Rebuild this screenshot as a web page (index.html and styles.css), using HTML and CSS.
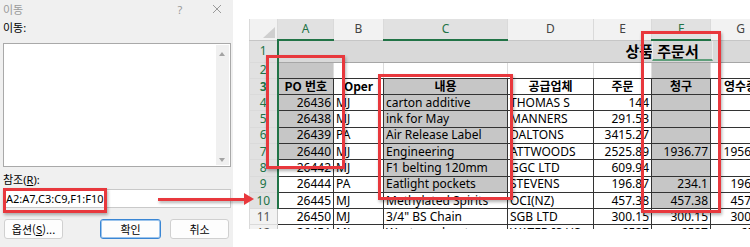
FILE: index.html
```html
<!DOCTYPE html>
<html lang="ko">
<head>
    <meta charset="UTF-8">
    <meta name="viewport" content="width=device-width, initial-scale=1.0">
    <title>이동 - 참조 범위</title>
    <link rel="stylesheet" href="styles.css">
</head>
<body>

<div class="screen">

    <div class="dialog">
        <div class="dlg-title">
            <span class="dlg-name">이동</span>
            <span class="dlg-help">?</span>
            <svg class="dlg-close" width="10" height="10" viewBox="0 0 10 10">
                <path d="M1 1 L9 9 M9 1 L1 9" stroke="#9a9a9a" stroke-width="1" fill="none"/>
            </svg>
        </div>
        <div class="dlg-label">이동:</div>
        <div class="listbox">
            <div class="scroll">
                <span class="tri-up"></span>
                <span class="tri-down"></span>
            </div>
        </div>
        <div class="dlg-label ref-label">참조(<u>R</u>):</div>
        <div class="ref-input">A2:A7,C3:C9,F1:F10</div>
        <div class="dlg-buttons">
            <button class="btn btn-opt">옵션(<u>S</u>)...</button>
            <button class="btn btn-ok">확인</button>
            <button class="btn btn-cancel">취소</button>
        </div>
    </div>

    <div class="sheet">
        <table class="grid">
            <colgroup>
                <col class="w-rh"><col class="w-a"><col class="w-b"><col class="w-c">
                <col class="w-d"><col class="w-e"><col class="w-f"><col class="w-g">
            </colgroup>
            <thead>
                <tr>
                    <th class="corner"><span class="corner-tri"></span></th>
                    <th class="on">A</th>
                    <th>B</th>
                    <th class="on">C</th>
                    <th>D</th>
                    <th>E</th>
                    <th class="on">F</th>
                    <th>G</th>
                </tr>
            </thead>
            <tbody>
                <tr class="r1">
                    <td class="rh on">1</td>
                    <td class="title" colspan="7"><span class="title-txt">상품 주문서</span><span class="f1"></span></td>
                </tr>
                <tr class="r2">
                    <td class="rh on">2</td>
                    <td class="sel"></td><td></td><td></td><td></td><td></td><td class="sel"></td><td></td>
                </tr>
                <tr class="d hd">
                    <td class="rh on">3</td>
                    <td class="sel">PO 번호</td><td>Oper</td><td class="sel">내용</td><td>공급업체</td><td>주문</td><td class="sel">청구</td><td>영수증</td>
                </tr>
                <tr class="d">
                    <td class="rh on">4</td>
                    <td class="sel n">26436</td><td>MJ</td><td class="sel">carton additive</td><td>THOMAS S</td><td class="n">144</td><td class="sel n"></td><td class="n"></td>
                </tr>
                <tr class="d">
                    <td class="rh on">5</td>
                    <td class="sel n">26438</td><td>MJ</td><td class="sel">ink for May</td><td>MANNERS</td><td class="n">291.53</td><td class="sel n"></td><td class="n"></td>
                </tr>
                <tr class="d">
                    <td class="rh on">6</td>
                    <td class="sel n">26439</td><td>PA</td><td class="sel">Air Release Label</td><td>DALTONS</td><td class="n">3415.27</td><td class="sel n"></td><td class="n"></td>
                </tr>
                <tr class="d">
                    <td class="rh on">7</td>
                    <td class="sel n">26440</td><td>MJ</td><td class="sel">Engineering</td><td>ATTWOODS</td><td class="n">2525.89</td><td class="sel n">1936.77</td><td class="n">1956.77</td>
                </tr>
                <tr class="d">
                    <td class="rh on">8</td>
                    <td class="n">26442</td><td>MJ</td><td class="sel">F1 belting 120mm</td><td>GGC LTD</td><td class="n">609.94</td><td class="sel n"></td><td class="n"></td>
                </tr>
                <tr class="d">
                    <td class="rh on">9</td>
                    <td class="n">26444</td><td>PA</td><td class="sel">Eatlight pockets</td><td>STEVENS</td><td class="n">196.87</td><td class="sel n">234.1</td><td class="n">196.87</td>
                </tr>
                <tr class="d">
                    <td class="rh on">10</td>
                    <td class="n">26445</td><td>MJ</td><td>Methylated Spirits</td><td>OCI(NZ)</td><td class="n">457.38</td><td class="sel n">457.38</td><td class="n">457.38</td>
                </tr>
                <tr class="d">
                    <td class="rh">11</td>
                    <td class="n">26450</td><td>MJ</td><td>3/4" BS Chain</td><td>SGB LTD</td><td class="n">300.15</td><td class="n">300.15</td><td class="n">300.15</td>
                </tr>
                <tr class="d">
                    <td class="rh">12</td>
                    <td class="n">26451</td><td>MJ</td><td>Waste and water</td><td>WATER IS US</td><td class="n">6527</td><td class="n">6527</td><td class="n">6527</td>
                </tr>
            </tbody>
        </table>
    </div>

    <!-- red call-outs drawn over the screenshot -->
    <div class="mark mark-ref"></div>
    <div class="mark mark-a"></div>
    <div class="mark mark-c"></div>
    <div class="mark mark-f"></div>
    <div class="arrow"></div>

</div>

</body>
</html>
```

FILE: styles.css
```css
body{
    margin: 0;
    background: #fff;
    font-family: "Noto Sans", "Noto Sans CJK KR", sans-serif;
    overflow: hidden;
}
.screen{
    position: relative;
    display: flex;
    width: 750px;
    height: 247px;
}

/* dialog */
.dialog{
    flex: none;
    width: 233px;
    height: 247px;
    background: #f0f0f0;
    font-size: 11px;
    color: #000;
}
.dlg-title{
    display: flex;
    align-items: center;
    height: 18px;
    padding: 0 9px 0 3px;
    color: #9a9a9a;
}
.dlg-name{
    flex: 1;
}
.dlg-help{
    width: 14px;
    text-align: center;
    margin-right: 23px;
}
.dlg-close{
    margin: 0 2px;
}
.dlg-label{
    margin-top: 2px;
    padding-left: 3px;
    line-height: 16px;
}
.ref-label{
    margin-top: 5px;
}
.listbox{
    position: relative;
    margin: 7px 0 0 3px;
    width: 226px;
    height: 122px;
    background: #fff;
    border: 1px solid #a9a9a9;
}
.scroll{
    position: absolute;
    right: 1px;
    top: 1px;
    bottom: 1px;
    width: 13px;
    background: #f0f0f0;
}
.tri-up,.tri-down{
    position: absolute;
    left: 3px;
    width: 0;
    height: 0;
    border-left: 3.5px solid transparent;
    border-right: 3.5px solid transparent;
}
.tri-up{
    top: 7px;
    border-bottom: 4px solid #a3a3a3;
}
.tri-down{
    bottom: 3px;
    border-top: 4px solid #a3a3a3;
}
.ref-input{
    margin: 1px 0 0 3px;
    width: 224px;
    height: 17px;
    padding-left: 2px;
    line-height: 17px;
    background: #fff;
    border: 1px solid #c9c9c9;
}
.dlg-buttons{
    display: flex;
    margin-top: 11px;
}
.btn{
    height: 20px;
    padding: 0;
    font: 11px "Noto Sans CJK KR", sans-serif;
    color: #000;
    background: #fdfdfd;
    border: 1px solid #d0d0d0;
    border-radius: 3px;
}
.btn-opt{
    margin-left: 4px;
    width: 59px;
}
.btn-ok{
    margin-left: 37px;
    width: 61px;
    border: 1px solid #3a86d4;
    box-shadow: inset 0 0 0 1px #9cc4ec;
}
.btn-cancel{
    margin-left: 9px;
    width: 59px;
}

/* spreadsheet */
.sheet{
    flex: none;
    margin: 19px 0 0 16px;
    width: 501px;
    height: 210px;
    overflow: hidden;
}
.grid{
    border-collapse: collapse;
    table-layout: fixed;
    width: 521px;
    font-size: 12px;
    color: #000;
}
.w-rh{width: 28px}
.w-a{width: 56px}
.w-b{width: 50px}
.w-c{width: 124px}
.w-d{width: 86px}
.w-e{width: 58px}
.w-f{width: 59px}
.w-g{width: 60px}

.grid tr{
    height: 16.3px;
}
.grid thead tr{
    height: 21px;
}
.grid .r1{
    height: 22px;
}
.grid td,.grid th{
    padding: 0 2px;
    line-height: 14px;
    white-space: nowrap;
    overflow: hidden;
    border: 1px solid #dcdcdc;
}
.grid th{
    font-weight: normal;
    color: #444;
    background: #f2f2f2;
    border-color: #dadada;
    border-top: none;
    border-bottom: 1px solid #c6c6c6;
}
.grid th.on{
    color: #217346;
    background: #e1e1e1;
    border-bottom: 2px solid #217346;
}
.grid th.corner{
    position: relative;
    background: #f2f2f2;
}
.corner-tri{
    position: absolute;
    right: 2px;
    bottom: 2px;
    width: 0;
    height: 0;
    border-left: 12px solid transparent;
    border-bottom: 11px solid #cfcfcf;
}
.grid td.rh{
    text-align: center;
    color: #555;
    background: #f2f2f2;
    border-color: #dadada;
    border-right: 1px solid #c6c6c6;
}
.grid td.rh.on{
    color: #217346;
    background: #e1e1e1;
    border-right: 2px solid #217346;
}

.grid .title{
    position: relative;
    background: #d9d9d9;
    border-bottom: 1px solid #a6a6a6;
    font-size: 15px;
    font-weight: bold;
    font-family: "Noto Sans CJK KR", sans-serif;
}
.title-txt{
    padding-left: 345px;
}
.f1{
    position: absolute;
    left: 373px;
    top: 0;
    width: 59px;
    height: 18px;
    border-left: 1px solid #ececec;
    border-right: 1px solid #ececec;
    border-bottom: 2px solid #5f9f7b;
}

.grid .r2 td{
    border-top: none;
}
.grid .r2 td:not(.rh){
    border-bottom-color: #333;
}
.grid .d td:not(.rh){
    border-color: #333;
}
.grid td.sel{
    background: #c6c6c6;
}
.grid td.n{
    text-align: right;
}
.grid .hd td{
    text-align: center;
    font-weight: bold;
    font-family: "Noto Sans CJK KR", "Noto Sans", sans-serif;
}

/* red call-outs */
.mark{
    position: absolute;
    border: 3px solid #e8383d;
    box-shadow: 1px 2px 3px rgba(0,0,0,.3);
}
.mark-ref{
    left: 3px;
    top: 188px;
    width: 98px;
    height: 19px;
}
.mark-a{
    left: 266px;
    top: 55px;
    width: 73px;
    height: 108px;
}
.mark-c{
    left: 378px;
    top: 74px;
    width: 129px;
    height: 120px;
}
.mark-f{
    left: 641px;
    top: 31px;
    width: 74px;
    height: 176px;
}
.arrow{
    position: absolute;
    left: 158px;
    top: 198px;
    width: 86px;
    height: 3px;
    background: #e8383d;
    box-shadow: 1px 2px 3px rgba(0,0,0,.3);
}
.arrow::after{
    content: '';
    position: absolute;
    right: -10px;
    top: -5px;
    width: 0;
    height: 0;
    border-left: 10px solid #e8383d;
    border-top: 6.5px solid transparent;
    border-bottom: 6.5px solid transparent;
}
```
